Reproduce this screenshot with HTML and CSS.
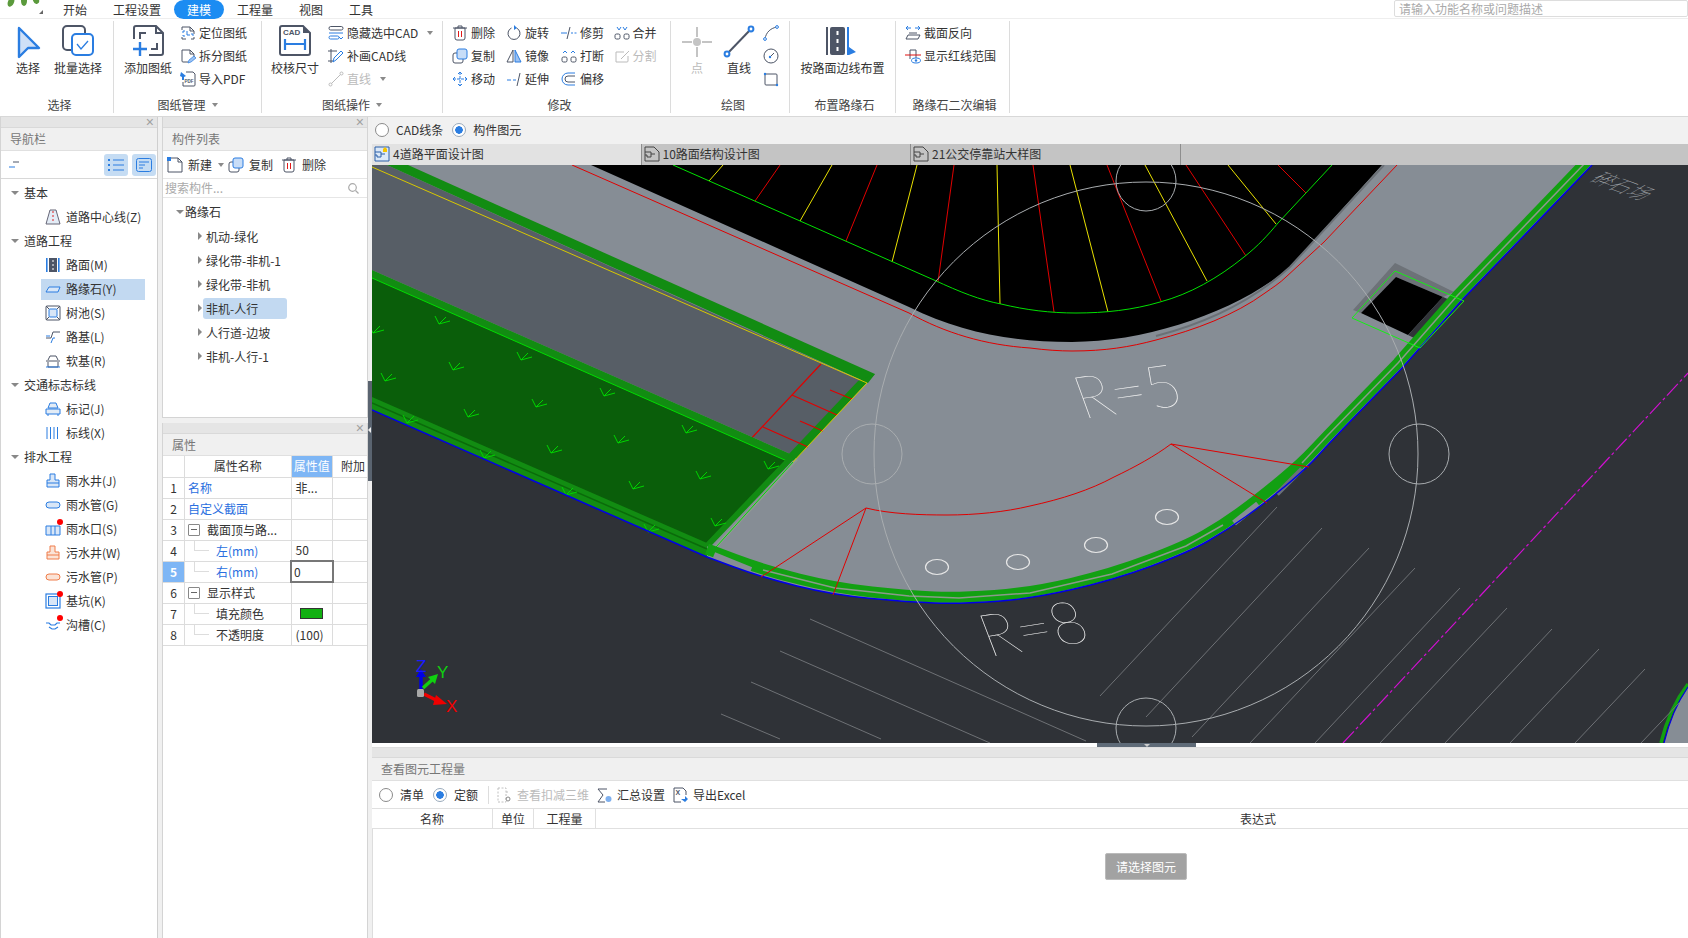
FILE: index.html
```html
<!DOCTYPE html>
<html lang="zh">
<head>
<meta charset="utf-8">
<title>建模</title>
<link rel="stylesheet" href="styles.css">
</head>
<body>
<header class="topbar">
  <div class="logo">
    <svg width="50" height="18" viewBox="0 0 50 18"><ellipse cx="11" cy="2" rx="3" ry="5" transform="rotate(25 11 2)" fill="#5b9a3c"/><ellipse cx="24" cy="1" rx="3" ry="5" fill="#5b9a3c"/><ellipse cx="36" cy="0" rx="3" ry="4" transform="rotate(-20 36 0)" fill="#5b9a3c"/><path d="M43 10v4h-4z" fill="#666"/></svg>
  </div>
  <nav class="tabs">
    <span class="tab">开始</span><span class="tab">工程设置</span><span class="tab active">建模</span><span class="tab">工程量</span><span class="tab">视图</span><span class="tab">工具</span>
  </nav>
  <div class="searchbox">请输入功能名称或问题描述</div>
</header>

<section class="ribbon">
  <div class="group g1 lp6">
    <div class="gbody">
      <div class="big w56"><svg class="bi" viewBox="0 0 34 36"><path d="M8 4 28 24H17L8 33z" fill="#cfe0f7" stroke="#2a7de1" stroke-width="2.4" stroke-linejoin="round"/></svg><span>选择</span></div>
      <div class="big w44"><svg class="bi" viewBox="0 0 34 36"><rect x="2" y="2" width="22" height="24" rx="4" fill="none" stroke="#4d5566" stroke-width="2"/><rect x="11" y="10" width="21" height="21" rx="4" fill="#fff" stroke="#2a7de1" stroke-width="2"/><path d="M16 20l4 5 7-8" fill="none" stroke="#2a7de1" stroke-width="1.3"/></svg><span>批量选择</span></div>
    </div>
    <div class="glabel">选择</div>
  </div>
  <div class="group g2">
    <div class="gbody">
      <div class="big w50"><svg class="bi" viewBox="0 0 34 36"><path d="M5 2h20l7 7v20a2 2 0 0 1-2 2H18M5 2a2 2 0 0 0-2 2v11M25 2v7h7" fill="none" stroke="#4d5566" stroke-width="2"/><path d="M9 15V9h6M20 25h6v-6" fill="none" stroke="#4d5566" stroke-width="2"/><path d="M2 25h14M9 18v14" fill="none" stroke="#2a7de1" stroke-width="2.4"/></svg><span>添加图纸</span></div>
      <div class="col cmt7">
        <div class="sm"><svg class="si" viewBox="0 0 16 16"><path d="M2 5V2h8l4 4v3M14 12v2h-3M6 14H2v-2M10 2v4h4" fill="none" stroke="#4d5566"/><path d="M5 6H3v2M5 11H3v-1M11 9h2v2M7 6v4h3" fill="none" stroke="#2a7de1"/></svg><span>定位图纸</span></div>
        <div class="sm"><svg class="si" viewBox="0 0 16 16"><path d="M8 14H3a1 1 0 0 1-1-1V2h8l4 4v3M10 2v4h4" fill="none" stroke="#4d5566"/><path d="M8 15l1-3 5-4 2 2-5 4z" fill="#9cc2f2" stroke="#2a7de1" stroke-width=".7"/></svg><span>拆分图纸</span></div>
        <div class="sm"><svg class="si" viewBox="0 0 16 16"><path d="M6 1h7l2 2v11a1 1 0 0 1-1 1H3V11" fill="none" stroke="#4d5566"/><path d="M1 1l5 4-2 1v3H2V6L0 5z" fill="#2a7de1"/><text x="4.5" y="11.5" class="tiny">PDF</text></svg><span>导入PDF</span></div>
      </div>
    </div>
    <div class="glabel">图纸管理<i class="caret"></i></div>
  </div>
  <div class="group g3">
    <div class="gbody">
      <div class="big w50"><svg class="bi" viewBox="0 0 34 36"><path d="M4 2h21l7 7v20a2 2 0 0 1-2 2H4a2 2 0 0 1-2-2V4a2 2 0 0 1 2-2z" fill="none" stroke="#4d5566" stroke-width="2"/><path d="M25 2v7h7" fill="#4d5566"/><text x="5" y="11" class="cad">CAD</text><path d="M7 15v11M27 15v11M7 20h20" fill="none" stroke="#2a7de1" stroke-width="2.2"/></svg><span>校核尺寸</span></div>
      <div class="col cmt8">
        <div class="sm"><svg class="si" viewBox="0 0 16 16"><rect x="1" y="1.5" width="14" height="3.5" rx="1.7" fill="none" stroke="#4d5566"/><path d="M1 8h14" stroke="#2a7de1"/><rect x="1" y="11" width="10" height="3" rx="1.5" fill="none" stroke="#2a7de1"/><path d="M11 12l2 2 2-2" fill="none" stroke="#2a7de1"/></svg><span>隐藏选中CAD</span><i class="caret mc"></i></div>
        <div class="sm"><svg class="si" viewBox="0 0 16 16"><path d="M3 1v14M0 3h9M0 13h6" fill="none" stroke="#4d5566"/><path d="M5 14l1-4 7-7 2 2-7 7z" fill="#fff" stroke="#2a7de1"/></svg><span>补画CAD线</span></div>
        <div class="sm off"><svg class="si" viewBox="0 0 16 16"><path d="M3 13 13 3" stroke="#bbb"/><circle cx="2.5" cy="13.5" r="1.5" fill="#fff" stroke="#bbb"/><circle cx="13.5" cy="2.5" r="1.5" fill="#fff" stroke="#bbb"/></svg><span>直线</span><i class="caret mc"></i></div>
      </div>
    </div>
    <div class="glabel">图纸操作<i class="caret"></i></div>
  </div>
  <div class="group g4 lp6">
    <div class="gbody">
      <div class="col cw54">
        <div class="sm"><svg class="si" viewBox="0 0 16 16"><path d="M3 3h10v10a2 2 0 0 1-2 2H5a2 2 0 0 1-2-2zM1 3h14M6 3V1h4v2" fill="none" stroke="#4d5566"/><path d="M6.5 6v6M9.5 6v6" stroke="#e11b1b"/></svg><span>删除</span></div>
        <div class="sm"><svg class="si" viewBox="0 0 16 16"><rect x="1" y="5" width="10" height="10" rx="2" fill="#fff" stroke="#4d5566"/><rect x="5" y="1" width="10" height="10" rx="2" fill="#c8ddf7" stroke="#2a7de1"/></svg><span>复制</span></div>
        <div class="sm"><svg class="si" viewBox="0 0 16 16"><path d="M8 1v14M1 8h14M8 1 6 3M8 1l2 2M8 15l-2-2M8 15l2-2M1 8l2-2M1 8l2 2M15 8l-2-2M15 8l-2 2" fill="none" stroke="#2a7de1" stroke-dasharray="3 1"/></svg><span>移动</span></div>
      </div>
      <div class="col cw55">
        <div class="sm"><svg class="si" viewBox="0 0 16 16"><path d="M10.5 3a6 6 0 1 1-5 0" fill="none" stroke="#4d5566"/><path d="M8 0l3 3-3 2z" fill="#2a7de1"/></svg><span>旋转</span></div>
        <div class="sm"><svg class="si" viewBox="0 0 16 16"><path d="M7 2v12H1z" fill="#fff" stroke="#4d5566"/><path d="M9 2v12h6z" fill="#9cc2f2" stroke="#2a7de1"/></svg><span>镜像</span></div>
        <div class="sm"><svg class="si" viewBox="0 0 16 16"><path d="M1 9h9" fill="none" stroke="#2a7de1" stroke-dasharray="4 2"/><path d="M14 2l-3 13" stroke="#4d5566"/></svg><span>延伸</span></div>
      </div>
      <div class="col cw52">
        <div class="sm"><svg class="si" viewBox="0 0 16 16"><path d="M0 8h6" stroke="#2a7de1"/><path d="M10 8h6" stroke="#2a7de1" stroke-dasharray="2 1.5"/><path d="M9 2 6 14" stroke="#4d5566"/></svg><span>修剪</span></div>
        <div class="sm"><svg class="si" viewBox="0 0 16 16"><path d="M2 5l2-2 2 2M10 5l2-2 2 2" fill="none" stroke="#2a7de1"/><rect x="1" y="9" width="5" height="5" rx="1.5" fill="none" stroke="#4d5566"/><rect x="10" y="9" width="5" height="5" rx="1.5" fill="none" stroke="#4d5566"/></svg><span>打断</span></div>
        <div class="sm"><svg class="si" viewBox="0 0 16 16"><path d="M14 2H7a6 6 0 0 0 0 12h7" fill="none" stroke="#2a7de1"/><path d="M14 5H7a3 3 0 0 0 0 6h7" fill="none" stroke="#4d5566"/></svg><span>偏移</span></div>
      </div>
      <div class="col">
        <div class="sm"><svg class="si" viewBox="0 0 16 16"><path d="M3 2l2 3 2-3M9 2l2 3 2-3" fill="none" stroke="#2a7de1"/><rect x="1" y="9" width="5" height="5" rx="1.5" fill="none" stroke="#4d5566"/><rect x="10" y="9" width="5" height="5" rx="1.5" fill="none" stroke="#4d5566"/></svg><span>合并</span></div>
        <div class="sm off"><svg class="si" viewBox="0 0 16 16"><path d="M14 8v5a1 1 0 0 1-1 1H2V4h8M7 11l8-8" fill="none" stroke="#bbb"/></svg><span>分割</span></div>
      </div>
    </div>
    <div class="glabel">修改</div>
  </div>
  <div class="group g5 lp6">
    <div class="gbody">
      <div class="big w36 off"><svg class="bi" viewBox="0 0 34 36"><path d="M17 3v10M17 23v10M2 18h10M22 18h10" stroke="#c4c4c4" stroke-width="2"/><circle cx="17" cy="18" r="4" fill="#c4c4c4"/></svg><span>点</span></div>
      <div class="big w48"><svg class="bi" viewBox="0 0 34 36"><path d="M5 30 29 5" stroke="#4d5566" stroke-width="2"/><circle cx="5" cy="30" r="2.4" fill="#fff" stroke="#2a7de1" stroke-width="2"/><circle cx="29" cy="5" r="2.4" fill="#fff" stroke="#2a7de1" stroke-width="2"/></svg><span>直线</span></div>
      <div class="col">
        <div class="sm"><svg class="si" viewBox="0 0 16 16"><path d="M2 14C3 7 8 3 14 2" fill="none" stroke="#4d5566"/><circle cx="2" cy="14" r="1.4" fill="#fff" stroke="#2a7de1"/><circle cx="14" cy="2" r="1.4" fill="#fff" stroke="#2a7de1"/></svg></div>
        <div class="sm"><svg class="si" viewBox="0 0 16 16"><circle cx="8" cy="8" r="7" fill="none" stroke="#4d5566"/><path d="M7 9l4-4" stroke="#4d5566"/><circle cx="7" cy="9" r="1.2" fill="#2a7de1"/></svg></div>
        <div class="sm"><svg class="si" viewBox="0 0 16 16"><rect x="2" y="3" width="12" height="11" rx="1" fill="none" stroke="#4d5566"/><circle cx="2" cy="3" r="1.2" fill="#2a7de1"/><circle cx="14" cy="14" r="1.2" fill="#2a7de1"/></svg></div>
      </div>
    </div>
    <div class="glabel">绘图</div>
  </div>
  <div class="group g6 lp4">
    <div class="gbody">
      <div class="big w106"><svg class="bi" viewBox="0 0 34 36"><rect x="0" y="3" width="2" height="28" fill="#4d5566"/><rect x="4" y="3" width="15" height="28" rx="2" fill="#4d5566"/><path d="M11.500 7v4M11.500 15v4M11.500 23v4" stroke="#fff" stroke-width="2"/><path d="M21 3h2v20l7 5-7 3h-2z" fill="#2a7de1"/></svg><span>按路面边线布置</span></div>
    </div>
    <div class="glabel">布置路缘石</div>
  </div>
  <div class="group g7 lp4">
    <div class="gbody">
      <div class="col">
        <div class="sm"><svg class="si" viewBox="0 0 16 16"><path d="M1 14h12l2-4H3zM4 8h8" fill="none" stroke="#4d5566"/><path d="M1 3h5M1 3l2-2M1 3l2 2M15 3h-5M15 3l-2-2M15 3l-2 2" fill="none" stroke="#2a7de1"/></svg><span>截面反向</span></div>
        <div class="sm"><svg class="si" viewBox="0 0 16 16"><path d="M5 11V2h6v8" fill="none" stroke="#4d5566"/><path d="M0 7h16" stroke="#d11"/><ellipse cx="11" cy="12.500" rx="4.500" ry="2.500" fill="#fff" stroke="#2a7de1"/><circle cx="11" cy="12.500" r="1.200" fill="#2a7de1"/></svg><span>显示红线范围</span></div>
      </div>
    </div>
    <div class="glabel">路缘石二次编辑</div>
  </div>
</section>

<main class="workspace">
  <aside class="panel nav">
    <div class="strip"><span class="x">×</span></div>
    <div class="ptitle">导航栏</div>
    <div class="navbar">
      <svg class="dash" width="10" height="8" viewBox="0 0 10 8"><path d="M4 1h6" stroke="#4d5566"/><path d="M0 6h6" stroke="#2a7de1"/></svg>
      <div class="navbtns">
        <span class="navbtn"><svg width="16" height="14" viewBox="0 0 16 14"><path d="M5 2h11M5 7h11M5 12h11" stroke="#2a7de1"/><rect x="0" y="1" width="2" height="2" fill="#2a7de1"/><rect x="0" y="6" width="2" height="2" fill="#2a7de1"/><rect x="0" y="11" width="2" height="2" fill="#2a7de1"/></svg></span>
        <span class="navbtn"><svg width="16" height="14" viewBox="0 0 16 14"><rect x=".5" y=".5" width="15" height="13" rx="2" fill="none" stroke="#2a7de1"/><path d="M3 4h10M3 7h6M3 10h4" stroke="#2a7de1"/></svg></span>
      </div>
    </div>
    <div class="navtree">
      <div class="tg"><i class="down"></i>基本</div>
      <div class="ti"><svg class="ni" viewBox="0 0 16 16"><path d="M5 1h6l4 14H1z" fill="#e3ecf6" stroke="#667"/><path d="M8 2v12" stroke="#d22" stroke-dasharray="2 2"/></svg><span>道路中心线(Z)</span></div>
      <div class="tg"><i class="down"></i>道路工程</div>
      <div class="ti"><svg class="ni" viewBox="0 0 16 16"><rect x="1" y="1" width="1.600" height="14" fill="#2a7de1"/><rect x="13" y="1" width="1.600" height="14" fill="#2a7de1"/><rect x="4" y="1" width="8" height="14" fill="#4d5566"/><path d="M8 3v2M8 7v2M8 11v2" stroke="#fff"/></svg><span>路面(M)</span></div>
      <div class="ti sel"><svg class="ni" viewBox="0 0 16 16"><path d="M1 11h12l2-5H4z" fill="#d8e6f7" stroke="#2a7de1"/></svg><span>路缘石(Y)</span></div>
      <div class="ti"><svg class="ni" viewBox="0 0 16 16"><rect x="1" y="1" width="14" height="14" rx="1" fill="none" stroke="#4d5566"/><rect x="4" y="4" width="8" height="8" rx="1" fill="#d8e6f7" stroke="#2a7de1"/><path d="M1 1l3 3M15 1l-3 3M1 15l3-3M15 15l-3-3" stroke="#4d5566"/></svg><span>树池(S)</span></div>
      <div class="ti"><svg class="ni" viewBox="0 0 16 16"><path d="M1 9h5l2-6h7" fill="none" stroke="#4d5566"/><path d="M1 7h4M6 14l2-5h2" fill="none" stroke="#2a7de1"/></svg><span>路基(L)</span></div>
      <div class="ti"><svg class="ni" viewBox="0 0 16 16"><path d="M3 7 5 3h6l2 4M1 8h14M3 9v5h10V9" fill="none" stroke="#4d5566"/><path d="M1 14h14" stroke="#2a7de1"/></svg><span>软基(R)</span></div>
      <div class="tg"><i class="down"></i>交通标志标线</div>
      <div class="ti"><svg class="ni" viewBox="0 0 16 16"><path d="M3 7 5 2h6l2 5zM1 8h14v5H1zM3 13v2M13 13v2" fill="#e3ecf6" stroke="#2a7de1"/></svg><span>标记(J)</span></div>
      <div class="ti"><svg class="ni" viewBox="0 0 16 16"><path d="M2 2v12M5.500 2v12M9 2v12M12.500 2v12" stroke="#2a7de1"/></svg><span>标线(X)</span></div>
      <div class="tg"><i class="down"></i>排水工程</div>
      <div class="ti"><svg class="ni" viewBox="0 0 16 16"><path d="M5 1h5v6h4v7H2V7h3zM2 10h12" fill="#d8e6f7" stroke="#2a7de1"/></svg><span>雨水井(J)</span></div>
      <div class="ti"><svg class="ni" viewBox="0 0 16 16"><rect x="1" y="5" width="14" height="6" rx="3" fill="#d8e6f7" stroke="#2a7de1"/></svg><span>雨水管(G)</span></div>
      <div class="ti"><svg class="ni" viewBox="0 0 16 16"><path d="M1 5h14v9H1zM6 5v9M10 5v9" fill="#d8e6f7" stroke="#2a7de1"/></svg><i class="dot"></i><span>雨水口(S)</span></div>
      <div class="ti"><svg class="ni" viewBox="0 0 16 16"><path d="M5 1h5v6h4v7H2V7h3zM2 10h12" fill="#fbe3d6" stroke="#ef7d4a"/></svg><span>污水井(W)</span></div>
      <div class="ti"><svg class="ni" viewBox="0 0 16 16"><rect x="1" y="5" width="14" height="6" rx="3" fill="#fbe3d6" stroke="#ef7d4a"/></svg><span>污水管(P)</span></div>
      <div class="ti"><svg class="ni" viewBox="0 0 16 16"><rect x="1" y="1" width="14" height="14" fill="#fff" stroke="#2a7de1" stroke-width="1.200"/><rect x="3.500" y="3.500" width="9" height="9" fill="#d8e6f7" stroke="#2a7de1"/></svg><i class="dot"></i><span>基坑(K)</span></div>
      <div class="ti"><svg class="ni" viewBox="0 0 16 16"><path d="M1 6h3l2 2h4l2-2h3M4 10l3 2h3l3-2" fill="none" stroke="#2a7de1" stroke-width="1.200"/></svg><i class="dot"></i><span>沟槽(C)</span></div>
    </div>
  </aside>

  <div class="midcol">
    <section class="panel comp">
      <div class="strip"><span class="x">×</span></div>
      <div class="ptitle">构件列表</div>
      <div class="cbar">
        <svg class="si" viewBox="0 0 16 16"><path d="M3 1h8l4 4v10H1V3" fill="#fff" stroke="#4d5566"/><path d="M11 1v4h4" fill="none" stroke="#4d5566"/><rect x="0" y="0" width="4" height="4" fill="#2a7de1"/></svg>
        <span class="bt">新建</span><i class="caret c1"></i>
        <svg class="si" viewBox="0 0 16 16"><rect x="1" y="5" width="10" height="10" rx="2" fill="#fff" stroke="#4d5566"/><rect x="5" y="1" width="10" height="10" rx="2" fill="#c8ddf7" stroke="#2a7de1"/></svg>
        <span class="bt">复制</span>
        <svg class="si c2" viewBox="0 0 16 16"><path d="M3 3h10v10a2 2 0 0 1-2 2H5a2 2 0 0 1-2-2zM1 3h14M6 3V1h4v2" fill="none" stroke="#4d5566"/><path d="M6.500 6v6M9.500 6v6" stroke="#e11b1b"/></svg>
        <span class="bt">删除</span>
      </div>
      <div class="csearch"><span>搜索构件...</span><svg width="11" height="11" viewBox="0 0 11 11"><circle cx="4.500" cy="4.500" r="3.800" fill="none" stroke="#aaa" stroke-width="1.200"/><path d="M7.500 7.500l3 3" stroke="#aaa" stroke-width="1.200"/></svg></div>
      <div class="ctree">
        <div class="cg"><i class="down"></i>路缘石</div>
        <div class="cc"><i class="right"></i><span>机动-绿化</span></div>
        <div class="cc"><i class="right"></i><span>绿化带-非机-1</span></div>
        <div class="cc"><i class="right"></i><span>绿化带-非机</span></div>
        <div class="cc"><i class="right"></i><span class="hl">非机-人行</span></div>
        <div class="cc"><i class="right"></i><span>人行道-边坡</span></div>
        <div class="cc"><i class="right"></i><span>非机-人行-1</span></div>
      </div>
    </section>
    <section class="panel props">
      <div class="strip"><span class="x">×</span></div>
      <div class="ptitle tall">属性</div>
      <table class="ptable">
        <colgroup><col class="c0"><col class="c1w"><col class="c2w"><col></colgroup>
        <tr><th></th><th>属性名称</th><th class="on">属性值</th><th class="last">附加</th></tr>
        <tr><td class="n">1</td><td class="blue">名称</td><td class="v">非...</td><td></td></tr>
        <tr><td class="n">2</td><td class="blue">自定义截面</td><td></td><td></td></tr>
        <tr><td class="n">3</td><td><div class="pc"><i class="minus"></i>截面顶与路...</div></td><td></td><td></td></tr>
        <tr><td class="n">4</td><td class="blue"><div class="pc"><i class="conn"></i>左(mm)</div></td><td class="v">50</td><td></td></tr>
        <tr><td class="n on">5</td><td class="blue"><div class="pc"><i class="conn"></i>右(mm)</div></td><td class="v edit">0</td><td></td></tr>
        <tr><td class="n">6</td><td><div class="pc"><i class="minus"></i>显示样式</div></td><td></td><td></td></tr>
        <tr><td class="n">7</td><td><div class="pc"><i class="conn"></i>填充颜色</div></td><td><i class="swatch"></i></td><td></td></tr>
        <tr><td class="n">8</td><td><div class="pc"><i class="conn"></i>不透明度</div></td><td class="v">(100)</td><td></td></tr>
      </table>
    </section>
  </div>

  <div class="splitter"><i class="tri"></i></div>

  <div class="rightcol">
    <div class="radiobar">
      <i class="radio"></i><span class="rl">CAD线条</span><i class="radio checked"></i><span>构件图元</span>
    </div>
    <div class="dtabs">
      <div class="dtab cur"><svg class="si" viewBox="0 0 16 16"><path d="M1 1h14v14H1zM1 6h6v5H3v-2H1M7 8h4" fill="#dbe8f7" stroke="#2a5fa8"/><path d="M9 6V3l2-2 2 2v3z" fill="#f5c400"/></svg><span>4道路平面设计图</span></div>
      <div class="dtab"><svg class="si" viewBox="0 0 16 16"><path d="M1 1h9l5 5v9H1zM1 6h6v5H3v-2H1M7 8h4" fill="none" stroke="#444"/></svg><span>10路面结构设计图</span></div>
      <div class="dtab"><svg class="si" viewBox="0 0 16 16"><path d="M1 1h9l5 5v9H1zM1 6h6v5H3v-2H1M7 8h4" fill="none" stroke="#444"/></svg><span>21公交停靠站大样图</span></div>
    </div>
    <div class="canvaswrap">
      <svg class="cad-canvas" width="1316" height="578" viewBox="372 165 1316 578">
        <defs>
          <g id="gr" fill="none" stroke="#00d400" stroke-width="1"><path d="M0 0-4-8M0 0 11-3M0 0 7-7"/></g>
        </defs>
        <rect x="372" y="165" width="1316" height="578" fill="#2f3237"/>
        <!-- plaza -->
        <path d="M372 165H1592L1462 300 1403 367 1367.500 403.500Q1332 440 1319.500 454 1307 468 1286 485.500 1265 503 1246 516.500 1227 530 1208 541 1189 552 1151.500 566 1114 580 1072 589.500 1030 599 994.500 601.500 959 604 934 603 909 602 871 598.500 833 595 797 586 761 577 734 567L707 557 372 410Z" fill="#868d95"/>
        <!-- slate -->
        <path d="M372 165H387L862 381 795 456 372 270Z" fill="#575e66"/>
        <!-- grass -->
        <path d="M372 272 791 458 707 546 372 400Z" fill="#0a5e0a"/>
        <!-- black island -->
        <path d="M591 165 909 307C960 332 1010 342 1072 342 1150 342 1240 310 1290 267L1382 165Z" fill="#000"/>
        <path d="M1156 336C1210 322 1256 298 1290 267L1384 165" fill="none" stroke="#6b7076" stroke-width="2"/>
        <!-- lines in island -->
        <g fill="none" stroke-width="1">
          <g stroke="#e8e000">
            <path d="M709 181 723 165M800 221 832 165M892 262 917 165M1000 304 997 165M1108 312 1070 165M1207 281 1145 165M1276 224 1228 165"/>
          </g>
          <g stroke="#e00000">
            <path d="M755 201 780 165M846 241 877 165M938 282 954 165M1054 312 1033 165M1161 301 1107 165M1246 256 1186 165M1306 193 1278 165"/>
          </g>
          <path d="M673 165 934 280C960 292 980 300 1001 304 1026 310 1050 313 1076 313 1105 313 1133 310 1160 302 1190 294 1218 278 1244 257 1258 246 1268 235 1278 223L1332 165" stroke="#00e000"/>
          <path d="M572 165 909 313C945 333 985 345 1030 348 1045 350 1060 351 1072 351 1105 351 1130 347 1156 340 1195 330 1235 315 1265 293 1272 288 1280 283 1286 277L1324 242 1397 165" stroke="#e00000"/>
        </g>
        <!-- top band and diagonal band -->
        <path d="M387 165H408L875 374 868 383Z" fill="#128c12"/>
        <path d="M858 381 875 374 794 461 786 457Z" fill="#128c12"/>
        <!-- red details on slate -->
        <path d="M821 364 748 442M792 395 837 415M763 427 808 447M830 390 852 399M800 421 823 431" fill="none" stroke="#e00000" stroke-width="1.200"/>
        <!-- grass band -->
        <path d="M372 270 795 456 789 462 372 278Z" fill="#128c12"/>
        <path d="M372 278 787 461" stroke="#00dc00" stroke-width="1"/>
        <path d="M792 457 707 546" stroke="#128c12" stroke-width="6"/>
        <path d="M797 459 711 552" stroke="#8f9a92" stroke-width="3"/>
        <path d="M372 167 867 383 793 462" fill="none" stroke="#d8c800" stroke-width="1"/>
        <path d="M793 462 707 557" stroke="#00dc00" stroke-width="1"/>
        <!-- arrows -->
        <use href="#gr" x="439" y="324"/><use href="#gr" x="521" y="360"/><use href="#gr" x="453" y="370"/><use href="#gr" x="385" y="381"/><use href="#gr" x="604" y="396"/><use href="#gr" x="536" y="407"/><use href="#gr" x="468" y="417"/><use href="#gr" x="373" y="333"/><use href="#gr" x="551" y="453"/><use href="#gr" x="618" y="443"/><use href="#gr" x="686" y="433"/><use href="#gr" x="633" y="489"/><use href="#gr" x="700" y="479"/><use href="#gr" x="768" y="469"/><use href="#gr" x="715" y="526"/>
        <!-- lower straight curb -->
        <path d="M372 397 707 543 707 557 372 410Z" fill="#128c12"/>
        <path d="M372 403 707 549" stroke="#0b6a0b" stroke-width="1.500"/>
        <use href="#gr" x="407" y="423"/><use href="#gr" x="484" y="458"/><use href="#gr" x="566" y="495"/><use href="#gr" x="648" y="532"/>
        <path d="M372 410 707 557" stroke="#0000e6" stroke-width="1.500"/>
        <!-- catch basin -->
        <path d="M1395 263 1454 292 1443 297 1396 277 1361 313 1353 310Z" fill="#6d7278"/>
        <path d="M1396 277 1443 297 1408 335 1361 313Z" fill="#000"/>
        <path d="M1443 297 1450 300 1418 340 1408 335Z" fill="#303338"/>
        <!-- curved curb -->
        <path d="M707 549L735 559.500Q763 570 799 579 835 588 872 592 909 596 934 597 959 598 994.500 595.500 1030 593 1071 583.500 1112 574 1149 560 1186 546 1204.500 535.500 1223 525 1241.500 511.500 1260 498 1281 480.500 1302 463 1314.500 449.500 1327 436 1362.500 399.500L1398 363 1457 296 1587 161" fill="none" stroke="#12a012" stroke-width="11"/>
        <path d="M763 570Q799 579 835 588 872 592 909 596 934 597 959 598 994.500 595.500 1030 593 1071 583.500 1112 574 1149 560 1186 546 1204.500 535.500 1223 525" fill="none" stroke="#8a9a8a" stroke-width="1.500"/>
        <path d="M1302 463Q1314.500 449.500 1327 436 1362.500 399.500 1398 363L1457 296 1587 161" fill="none" stroke="#8a9a8a" stroke-width="1.500"/>
        <path d="M714 555 751 570" stroke="#868d95" stroke-width="6"/>
        <path d="M1234 523 1258 504" stroke="#868d95" stroke-width="6"/>
        <path d="M1277 494 1302 469" stroke="#6a7078" stroke-width="5"/>
        <path d="M707 557L734 567Q761 577 797 586 833 595 871 598.500 909 602 934 603 959 604 994.500 601.500 1030 599 1072 589.500 1114 580 1151.500 566 1189 552 1208 541 1227 530 1246 516.500 1265 503 1286 485.500 1307 468 1319.500 454 1332 440 1367.500 403.500L1403 367 1462 300 1592 165" fill="none" stroke="#0000e6" stroke-width="1.500"/>
        <path d="M1395 271 1464 301 1420 348 1352 318Z" fill="none" stroke="#14f014" stroke-width="1"/>
        <path d="M1664 743Q1672 710 1688 687V743Z" fill="#868d95"/>
        <path d="M1661 743Q1669 709 1688 684" fill="none" stroke="#12a012" stroke-width="3.500"/>
        <path d="M1664 743Q1672 710 1688 687" fill="none" stroke="#0000e6" stroke-width="1.200"/>
        <!-- red arcs on plaza -->
        <g fill="none" stroke="#e00000" stroke-width="1">
          <path d="M866 508C890 514 920 515 947 515 975 515 1005 512 1030 506 1062 499 1090 490 1114 477 1135 467 1155 456 1171 444"/>
          <path d="M866 508 761 577M866 508 833 595M1171 444 1309 467M1171 444 1267 503"/>
        </g>
        <!-- white ellipses -->
        <g fill="none" stroke="#e6e6e6" stroke-width="1.200">
          <ellipse cx="937" cy="567" rx="11.500" ry="7.500"/><ellipse cx="1018" cy="562" rx="11.500" ry="7.500"/><ellipse cx="1096" cy="545" rx="11.500" ry="7.500"/><ellipse cx="1167" cy="517" rx="11.500" ry="7.500"/>
        </g>
        <!-- parking lines -->
        <g fill="none" stroke="#6e7175" stroke-width="1">
          <path d="M1100 696 1277 507M1146 717 1322 528M1192 737 1369 548M1250 743 1415 568M1315 743 1460 588M1380 743 1507 608M1445 743 1552 629M1510 743 1599 649M1575 743 1645 669M1641 743 1680 702"/>
          <path d="M810 619 1086 741M780 651 990 743M751 682 881 739M721 714 780 739"/>
        </g>
        <path d="M1343 743 1688 373" fill="none" stroke="#d010d0" stroke-width="1.200" stroke-dasharray="16 3 3 3"/>
        <!-- construction circles -->
        <g fill="none" stroke="#a9adb0" stroke-width="1">
          <circle cx="1146" cy="454" r="272"/>
          <circle cx="1146" cy="181" r="30"/><circle cx="1419" cy="454" r="30"/><circle cx="872" cy="454" r="30"/><circle cx="1146" cy="728" r="30"/>
        </g>
        <!-- labels -->
        <text class="cadt" transform="translate(1083 419) rotate(-8) skewX(12)">R=5</text>
        <text class="cadt" transform="translate(989 657) rotate(-9) skewX(12)">R=8</text>
        <text class="cadz" transform="translate(1588 181) rotate(20) skewX(-40)">碎石场</text>
        <!-- axes -->
        <path d="M421 690V674" stroke="#0000e6" stroke-width="3.500"/><path d="M416 677 421 669 426 677Z" fill="#0000e6"/>
        <path d="M423 688 433 679" stroke="#10d010" stroke-width="3.500"/><path d="M428 677 438 674 435 684Z" fill="#10d010"/>
        <path d="M424 694 438 701" stroke="#f00000" stroke-width="3.500"/><path d="M436 695 447 704 433 705Z" fill="#f00000"/>
        <rect x="417" y="689" width="7" height="8" rx="1.500" fill="#a8a8a8"/>
        <text x="416" y="672" class="axt" fill="#1a1aff">Z</text>
        <text x="437" y="678" class="axt" fill="#10d010">Y</text>
        <text x="446" y="712" class="axt" fill="#f00000">X</text>
      </svg>
      <div class="handle"><i class="tri2"></i></div>
    </div>
    <div class="gapline"></div>
    <section class="qty">
      <div class="strip wide"></div>
      <div class="ptitle">查看图元工程量</div>
      <div class="qbar">
        <i class="radio"></i><span class="rl2">清单</span><i class="radio checked"></i><span>定额</span>
        <i class="vsep"></i>
        <span class="qb off"><svg class="si" viewBox="0 0 16 16"><path d="M2 1h8v14H2zM10 5h3" fill="none" stroke="#c0c0c0" stroke-dasharray="2 1.500"/><circle cx="12" cy="12" r="2" fill="none" stroke="#888"/></svg>查看扣减三维</span>
        <span class="qb"><svg class="si" viewBox="0 0 16 16"><path d="M11 2H2l5 6-5 7h7" fill="none" stroke="#4d5566"/><circle cx="12.500" cy="12" r="3" fill="#7fb0ee"/></svg>汇总设置</span>
        <span class="qb"><svg class="si" viewBox="0 0 16 16"><path d="M2 1h9l3 3v4M9 15H2V1" fill="none" stroke="#4d5566"/><text x="3.500" y="8" class="tinyx">X</text><path d="M9 12h4V9l3 3-3 3z" fill="#2a7de1"/></svg>导出Excel</span>
      </div>
      <div class="qhead"><span class="q1">名称</span><span class="q2">单位</span><span class="q3">工程量</span><span class="q4">表达式</span></div>
      <div class="qbody"><span class="pick">请选择图元</span></div>
    </section>
  </div>
</main>
</body>
</html>
```
FILE: styles.css
```css
* { box-sizing: border-box; }
html, body { margin: 0; padding: 0; }
body {
  width: 1688px; height: 938px; overflow: hidden;
  background: #f0f0f0; color: #333;
  font: 12px/16px "Noto Sans CJK SC", "Liberation Sans", sans-serif;
}
i { font-style: normal; display: block; flex: none; }
svg { display: block; flex: none; }

/* top bar */
.topbar { display: flex; height: 19px; background: #fff; border-bottom: 1px solid #eee; }
.logo { width: 50px; }
.tabs { display: flex; }
.tab { padding: 1px 13px 0; height: 20px; line-height: 18px; white-space: nowrap; }
.tab.active { background: #1c8cf2; color: #fff; border-radius: 10px; height: 19px; }
.searchbox {
  margin-left: auto; width: 294px; height: 17px; padding-left: 4px;
  border: 1px solid #ddd; border-radius: 2px; color: #aaa; line-height: 15px; position: relative; z-index: 1;
}

/* ribbon */
.ribbon { display: flex; align-items: flex-start; height: 98px; padding-top: 2px; background: #fff; border-bottom: 1px solid #d8d8d8; }
.group { height: 92px; border-right: 1px solid #dcdcdc; display: flex; flex-direction: column; }
.g1 { width: 114px; } .g2 { width: 148px; } .g3 { width: 181px; } .g4 { width: 228px; }
.g5 { width: 119px; } .g6 { width: 106px; } .g7 { width: 114px; }
.gbody { display: flex; height: 77px; }
.glabel { text-align: center; height: 16px; color: #444; white-space: nowrap; display: flex; justify-content: center; align-items: center; gap: 6px; }
.lp6 .glabel { padding-left: 6px; } .lp4 .glabel { padding-left: 4px; }
.g2 .gbody { padding-left: 9px; } .g3 .gbody { padding-left: 8px; } .g4 .gbody { padding-left: 9px; }
.g5 .gbody { padding-left: 8px; } .g7 .gbody { padding-left: 9px; }
.big { display: flex; flex-direction: column; align-items: center; padding-top: 3px; white-space: nowrap; }
.bi { width: 34px; height: 36px; }
.w36 { width: 36px; } .w44 { width: 44px; } .w48 { width: 48px; } .w50 { width: 50px; } .w56 { width: 56px; } .w106 { width: 105px; }
.col { display: flex; flex-direction: column; }
.cmt7 { margin-left: 7px; } .cmt8 { margin-left: 8px; }
.cw54 { width: 54px; } .cw55 { width: 55px; } .cw52 { width: 52.5px; }
.sm { display: flex; align-items: center; gap: 3px; height: 23px; white-space: nowrap; }
.si { width: 16px; height: 16px; }
.off { color: #bbb; }
.caret { width: 0; height: 0; border: 3.5px solid transparent; border-top: 4px solid #8a8a8a; border-bottom: 0; }
.mc { margin-left: 6px; }
.tiny { font: 700 4.5px "Liberation Sans", sans-serif; fill: #4d5566; }
.tinyx { font: 700 7px "Liberation Sans", sans-serif; fill: #4d5566; }
.cad { font: 700 8px "Liberation Sans", sans-serif; fill: #4d5566; }

/* workspace */
.workspace { display: flex; height: 821px; }
.panel { background: #fff; }
.strip { height: 11px; background: #e5e5e5; display: flex; justify-content: flex-end; border-bottom: 1px solid #d9d9d9; }
.x { color: #a0a0a0; font: 14px/10px "Liberation Sans", sans-serif; padding-right: 3px; }
.ptitle { height: 23px; background: #f0f0f0; color: #777; line-height: 22px; padding-left: 9px; border-bottom: 1px solid #e0e0e0; }
.ptitle.tall { height: 22px; padding-left: 9px; }

.nav { width: 158px; border-left: 1px solid #d4d4d4; border-right: 1px solid #cfcfcf; }
.navbar { height: 28px; display: flex; align-items: center; justify-content: space-between; padding: 0 1px 0 8px; border-bottom: 1px solid #d8d8d8; }
.navbtns { display: flex; gap: 4px; }
.navbtn { width: 24px; height: 22px; background: #c5dcf3; border-radius: 3px; display: flex; align-items: center; justify-content: center; }
.navtree { padding-top: 2px; }
.tg { display: flex; align-items: center; height: 24px; padding-left: 10px; gap: 5px; white-space: nowrap; }
.down { width: 0; height: 0; border: 4px solid transparent; border-top: 4px solid #888; border-bottom: 0; }
.right { width: 0; height: 0; border: 4px solid transparent; border-left: 4px solid #888; border-right: 0; }
.ti { display: flex; align-items: center; height: 24px; margin-left: 43px; padding-left: 1px; gap: 5px; white-space: nowrap; position: relative; }
.ti.sel { background: linear-gradient(#c2d9f1, #c2d9f1) no-repeat 0 50% / 104px 21px; margin-left: 40px; padding-left: 4px; }
.ni { width: 16px; height: 16px; }
.dot { width: 6px; height: 6px; border-radius: 50%; background: #f00; position: absolute; left: 13px; top: 2px; }

.midcol { width: 206px; margin-left: 4px; display: flex; flex-direction: column; gap: 5px; }
.comp { height: 301px; border-left: 1px solid #d4d4d4; border-right: 1px solid #d4d4d4; border-bottom: 1px solid #d4d4d4; }
.cbar { height: 28px; display: flex; align-items: center; padding-left: 4px; border-bottom: 1px solid #e6e6e6; }
.bt { margin-left: 5px; }
.c1 { margin: 0 4px 0 6px; }
.c2 { margin-left: 8px; }
.csearch { height: 19px; display: flex; align-items: center; justify-content: space-between; padding: 0 8px 0 2px; color: #aaa; border-bottom: 1px solid #e6e6e6; }
.ctree { padding-top: 2px; }
.cg { height: 24px; display: flex; align-items: center; gap: 1px; padding-left: 13px; }
.cc { height: 24px; display: flex; align-items: center; padding-left: 35px; gap: 1px; }
.cc span { padding: 0 3px; height: 21px; line-height: 21px; border-radius: 3px; white-space: nowrap; }
.cc .hl { background: #c2d9f1; width: 84px; }

.props { flex: 1; border-left: 1px solid #d4d4d4; border-right: 1px solid #d4d4d4; }
.ptable { border-collapse: collapse; table-layout: fixed; width: 100%; }
.c0 { width: 21.5px; } .c1w { width: 106.5px; } .c2w { width: 41.5px; }
.ptable th, .ptable td { height: 21px; padding: 0; border: 1px solid #dcdcdc; font-weight: 400; white-space: nowrap; overflow: hidden; }
.ptable tr > :first-child { border-left: 0; }
.ptable tr > :last-child { border-right: 0; }
.ptable tr:first-child > * { border-top: 0; }
.ptable th { text-align: center; }
.ptable th.last { text-align: left; padding-left: 8px; }
.ptable th.on { background: #7eb6f5; color: #fff; }
.ptable .n { text-align: center; }
.ptable .n.on { background: #7eb6f5; color: #fff; font-weight: 700; }
.ptable .blue { color: #2a6fe0; padding-left: 3px; }
.ptable .blue .pc { margin-left: -3px; }
.ptable .v { padding-left: 4px; }
.ptable .edit { border: 2px solid #777; padding-left: 2px; }
.pc { display: flex; align-items: center; height: 20px; padding-left: 3px; }
.minus { width: 12px; height: 12px; border: 1px solid #888; border-radius: 1px; margin-right: 7px; background: linear-gradient(#666, #666) no-repeat center / 6px 1px; }
.conn { width: 15px; height: 10px; margin: -10px 7px 0 6px; border-left: 1px solid #ddd; border-bottom: 1px solid #ddd; }
.swatch { width: 23px; height: 11px; margin: 0 auto; background: #12b012; border: 1px solid #333; }

.splitter { width: 4px; flex: none; background: linear-gradient(#5a6470, #5a6470) no-repeat 0 264px / 4px 100px; }
.tri { width: 0; height: 0; border: 3px solid transparent; border-right: 3px solid #eee; border-left: 0; margin-top: 310px; }

.rightcol { width: 1316px; display: flex; flex-direction: column; }
.radiobar { height: 27px; display: flex; align-items: center; padding: 0 0 1px 3px; background: #f1f1f1; }
.radio { width: 14px; height: 14px; border-radius: 50%; border: 1px solid #8a8a8a; background: #fff; margin-right: 7px; }
.radio.checked { border-color: #9ab; background: radial-gradient(circle, #2a7de1 0 3.5px, #fff 4px); }
.rl { margin-right: 9px; }
.rl2 { margin-right: 9px; }
.dtabs { display: flex; height: 21px; background: #c4c4c4; }
.dtab { width: 269.5px; display: flex; align-items: center; gap: 3px; padding: 0 0 1px 2px; border-right: 1px solid #8e8e8e; }
.dtab.cur { background: #e2e2e2; }
.canvaswrap { position: relative; height: 578px; }
.cad-canvas { display: block; }
.cadt { font: 200 60px "Lato", "Liberation Sans", sans-serif; fill: #f2f2f2; }
.cadz { font: 100 19px "Noto Sans CJK SC", sans-serif; fill: #a6abaf; }
.axt { font: 300 17px "Liberation Sans", sans-serif; }
.handle { position: absolute; left: 725px; top: 578px; width: 99px; height: 4px; background: #5f6b78; display: flex; justify-content: center; }
.tri2 { width: 0; height: 0; border: 3px solid transparent; border-top: 3px solid #ccc; border-bottom: 0; margin-top: 1px; }
.gapline { height: 4px; background: #fff; }
.qty { flex: 1; background: #fff; display: flex; flex-direction: column; }
.strip.wide { border-top: 1px solid #ddd; }
.qbar { height: 28px; display: flex; align-items: center; padding-left: 7px; border-bottom: 1px solid #e0e0e0; }
.vsep { width: 1px; height: 18px; background: #ddd; margin: 0 7px 0 10px; }
.qb { display: flex; align-items: center; gap: 5px; margin-right: 7px; white-space: nowrap; }
.qhead { height: 20px; display: flex; line-height: 19px; border-bottom: 1px solid #e0e0e0; text-align: center; }
.qhead span { border-right: 1px solid #e0e0e0; }
.q1 { width: 121px; } .q2 { width: 41px; } .q3 { width: 62px; }
.qhead .q4 { border: 0; padding-left: 644px; }
.qbody { flex: 1; padding: 24px 0 0 732px; border-left: 1px solid #ddd; }
.pick { display: block; width: 82px; height: 27px; line-height: 26px; text-align: center; color: #fff; background: #a2a2a2; border: 1px solid #bbb; border-radius: 2px; }
```
